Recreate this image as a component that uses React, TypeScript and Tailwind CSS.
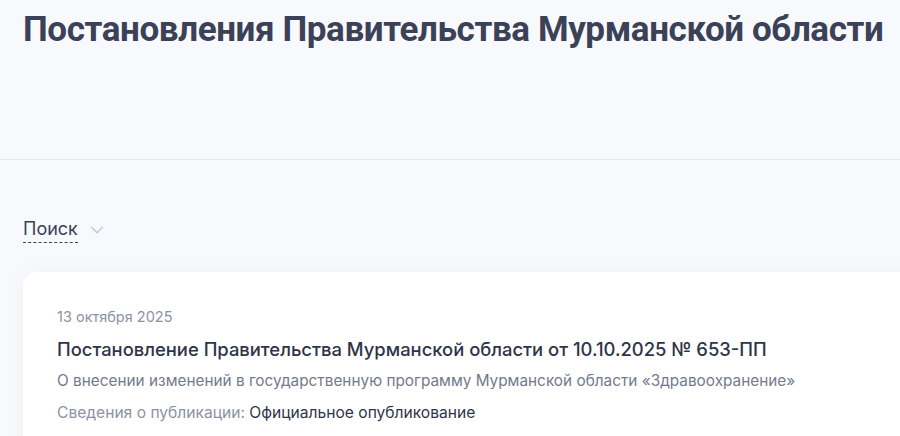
import { ChevronDown } from "lucide-react";

export default function App() {
  return (
    <div className="min-h-[436px] w-[900px] overflow-hidden bg-[#f8f9fc] font-['Inter',sans-serif]">
      {/* Header */}
      <header className="h-[160px] border-b border-[#e6e8ee] px-[23px] pt-[8px]">
        <h1 className="font-['Roboto',sans-serif] text-[35px] font-bold leading-[44px] tracking-[-0.4px] text-[#3b4157] whitespace-nowrap">
          Постановления Правительства Мурманской области
        </h1>
      </header>

      <main className="px-[23px] pt-[56px]">
        {/* Search toggle */}
        <button className="flex items-center gap-[8px]">
          <span className="border-b border-dashed border-[#3b4157] text-[18px] leading-[26px] text-[#3b4157]">
            Поиск
          </span>
          <ChevronDown className="h-[22px] w-[22px] text-[#c3c7dc]" strokeWidth={1.6} />
        </button>

        {/* Card */}
        <article className="mt-[29px] w-[900px] rounded-[14px] bg-white px-[34px] pt-[35px] pb-[30px] shadow-[0_0_24px_rgba(30,40,80,0.04)]">
          <div className="text-[14.5px] leading-[20px] text-[#8c92a3]">13 октября 2025</div>
          <a href="#" className="mt-[9px] block text-[18.4px] font-medium leading-[26px] text-[#2f3448]">
            Постановление Правительства Мурманской области от 10.10.2025 № 653-ПП
          </a>
          <p className="mt-[8px] text-[15.35px] leading-[22px] text-[#747a8c]">
            О внесении изменений в государственную программу Мурманской области «Здравоохранение»
          </p>
          <p className="mt-[10px] text-[15.6px] leading-[22px] text-[#8c92a3]">
            Сведения о публикации: <span className="text-[#2f3448]">Официальное опубликование</span>
          </p>
        </article>
      </main>
    </div>
  );
}
